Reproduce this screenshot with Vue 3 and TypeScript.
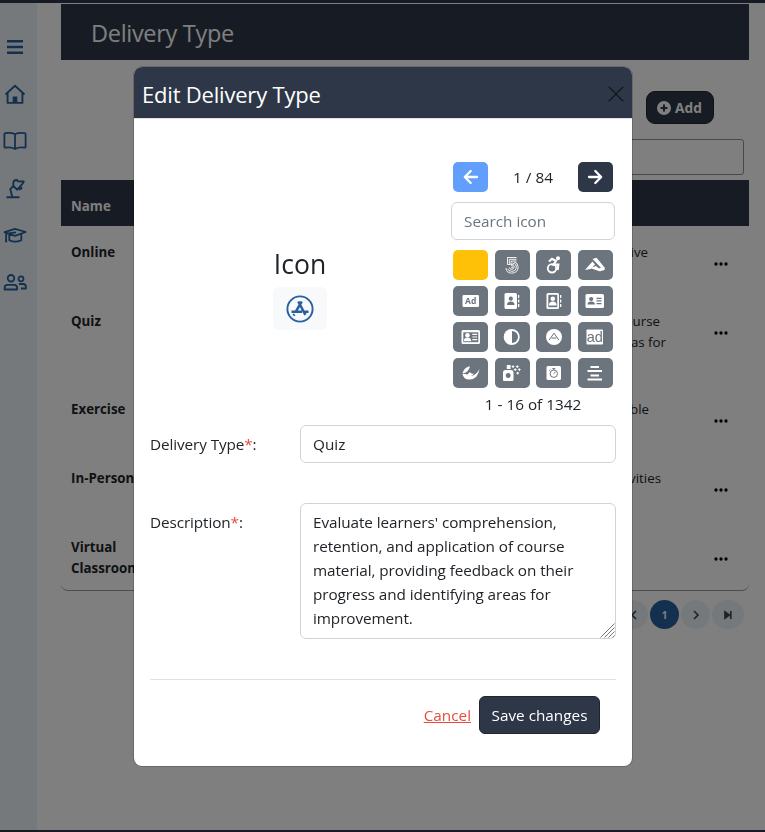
<script setup lang="ts">
import { ref } from 'vue'

interface Line { text: string; width: number }
interface Row { name: string; tall?: boolean; lines: Line[] }

const rows: Row[] = [
  { name: 'Online', lines: [{ text: 'interactive', width: 115 }] },
  { name: 'Quiz', tall: true, lines: [{ text: 'of course', width: 127 }, { text: 'areas for', width: 133 }] },
  { name: 'Exercise', lines: [{ text: 'applicable', width: 116 }] },
  { name: 'In-Person', lines: [{ text: 'activities', width: 128 }] },
  { name: 'Virtual Classroom', lines: [] },
]

const icons = [
  'blank', 'five', 'access', 'accusoft', 'ad', 'book', 'book-o', 'card',
  'card-o', 'adjust', 'adn', 'adversal', 'affiliate', 'spray', 'algolia', 'center',
]

const deliveryType = ref('Quiz')
const description = ref(
  "Evaluate learners' comprehension,\nretention, and application of course\nmaterial, providing feedback on their\nprogress and identifying areas for\nimprovement.",
)
const search = ref('')
</script>

<template>
  <div class="page">
    <div class="topbar"></div>
    <div class="shell">
      <nav class="side">
        <svg viewBox="0 0 24 24"><path d="M4 6.300h16M4 12h16M4 17.700h16" stroke-width="2.400" /></svg>
        <svg viewBox="0 0 24 24"><path d="M2.500 12.500 12 3.800 21.500 12.500M4.600 11V20.900h14.800V11" stroke-width="1.900" /><path class="solid" d="M9.700 14.500h4.600v6.500H9.700z" /></svg>
        <svg viewBox="0 0 24 24"><path d="M12 5.200C9 3.600 5 3.700 2.400 4.200q-1 .2-1 1v12.600q0 1 1.100.9c3-.5 6.500-.4 9.500 1.300 3-1.700 6.500-1.800 9.500-1.300q1.100.1 1.100-.9V5.200q0-.8-1-1C19 3.700 15 3.600 12 5.200zM12 5.200V20" stroke-width="1.800" /></svg>
        <svg viewBox="0 0 24 24"><path d="M3.500 21.300h13M9.300 21 7.300 13.200l3.200-3.500M10.300 6.500Q11 3.800 14 4l1 1.300 5.700.2-1 2-5.400 6.200-3.900-3.700zM18.300 10.800v1.900l-2.300.8" stroke-width="1.900" /></svg>
        <svg viewBox="0 0 24 24"><path d="M1.500 9.200 12 5.800l10.800 3.200L12 12.900zM6.300 11.500v5.700q5.500 3 12 0V11.500M3.100 10.200v8M13 9.300 3.500 10.700M2 18.300h2.200" stroke-width="1.800" /></svg>
        <svg viewBox="0 0 24 24"><circle cx="8" cy="8.300" r="3.300" stroke-width="1.800" /><circle cx="18" cy="8.800" r="2.500" stroke-width="1.700" /><path d="M1.600 19.500v-1.600q0-3 3-3h6.500q3 0 3 3V19.500zM16 14h4q2.900 0 2.900 2.800V18.500h-5" stroke-width="1.800" /></svg>
      </nav>
      <main class="main">
        <h2 class="title">Delivery Type</h2>
        <div class="actions">
          <button class="add">
            <svg viewBox="0 0 16 16"><path fill-rule="evenodd" d="M8 1a7 7 0 1 0 0 14A7 7 0 0 0 8 1zM7 4.500h2V7h2.500v2H9v2.500H7V9H4.500V7H7z" /></svg>
            <span>Add</span>
          </button>
        </div>
        <div class="filter"><div class="filter-box"></div></div>
        <div class="table">
          <div class="thead">Name</div>
          <div v-for="r in rows" :key="r.name" class="trow" :class="{ tall: r.tall }">
            <div class="name">{{ r.name }}</div>
            <div class="desc">
              <div v-for="l in r.lines" :key="l.text" class="dline" :style="{ width: l.width + 'px' }">{{ l.text }}</div>
            </div>
            <svg class="dots" viewBox="0 0 14 4"><circle cx="2" cy="2" r="1.650" /><circle cx="7" cy="2" r="1.650" /><circle cx="12" cy="2" r="1.650" /></svg>
          </div>
        </div>
        <div class="pager">
          <span class="pg"><svg viewBox="0 0 12 12"><path d="M8 2 4 6l4 4" /></svg></span>
          <span class="pg current">1</span>
          <span class="pg"><svg viewBox="0 0 12 12"><path d="M4 2l4 4-4 4" /></svg></span>
          <span class="pg last"><svg viewBox="0 0 12 12"><path class="fill" d="M3 3l4.300 3L3 9z" /><path d="M8.800 2v8" /></svg></span>
        </div>
      </main>
    </div>
    <div class="topbar foot"></div>
  </div>

  <div class="backdrop">
    <div class="modal">
      <header class="mhead">
        <h5>Edit Delivery Type</h5>
        <svg class="close" viewBox="0 0 16 16"><path d="M.8.8l14.400 14.400M15.200.8.8 15.200" /></svg>
      </header>
      <div class="mbody">
        <section class="iconrow">
          <div class="chosen">
            <h3>Icon</h3>
            <div class="preview">
              <svg viewBox="0 0 28 28"><circle cx="14" cy="14" r="12.600" stroke-width="1.900" /><path d="M12.300 6.500 19.400 19.800M15.700 6.500 9.700 16.800M8.400 19.200l-.9 1.400M5.500 16.800H16M18.800 16.800h3.700" stroke-width="2.500" /></svg>
            </div>
          </div>
          <div class="picker">
            <div class="pnav">
              <button class="sq prev"><svg viewBox="0 0 16 16"><path d="M14 8H2M7.700 2 1.800 8l5.900 6" /></svg></button>
              <span>1 / 84</span>
              <button class="sq next"><svg viewBox="0 0 16 16"><path d="M2 8h12M8.300 2l5.900 6-5.900 6" /></svg></button>
            </div>
            <input v-model="search" class="control search" placeholder="Search icon" />
            <div class="grid">
              <button v-for="ic in icons" :key="ic" class="sq tile" :class="{ picked: ic === 'blank' }">
                <svg v-if="ic === 'five'" viewBox="0 0 20 18"><g class="line thin"><path d="M14.500 1.500H5.500v7M14.500 3.300H7.300v4q7-1.300 7 3.500 0 4.500-4.600 4.500-3.500 0-4-2.500M14.500 5H9v1.200M5.500 8.500h3q3.800-.8 3.800 2 0 2.800-2.800 2.800-1.900 0-2-1.800M4 12.200q.3 4.900 5.700 4.900 6.400 0 6.400-6.300 0-4-4-4.900M9 9.700q1.800-.4 1.800 1t-1.600 1" /></g></svg>
                <svg v-else-if="ic === 'access'" viewBox="0 0 20 18"><g class="line"><path d="M5 5.500 8 2.800l4 2.200-2.500 3.700h4.800l-.7 5.300" stroke-width="2.200" /><circle cx="8" cy="12.300" r="4.200" stroke-width="1.900" /></g><circle cx="14" cy="2.300" r="2" /></svg>
                <svg v-else-if="ic === 'accusoft'" viewBox="0 0 20 18"><path d="M7.500 3 11.500 1.800l8.300 10-.3 2.200-4.500 1.200L12 13l4-1.200z" /><path d="M7.500 5.500 10 8.500 5.500 13 0 14zM5 12l6-2 5 4.300-1.500 1z" /></svg>
                <svg v-else-if="ic === 'ad'" viewBox="0 0 20 18"><rect x="1.500" y="3" width="16.500" height="12" rx="1.300" /><text x="9.700" y="12" class="adtext">Ad</text></svg>
                <svg v-else-if="ic === 'book'" viewBox="0 0 20 18"><rect x="2.500" y="1" width="12.500" height="16" rx="1.600" /><path d="M16 3h1.300v3H16zM16 7.500h1.300v3H16zM16 12h1.300v3H16z" /><g class="cut"><circle cx="8.800" cy="6.700" r="2.100" /><path d="M5 13q0-3.500 3.800-3.500T12.500 13z" /></g></svg>
                <svg v-else-if="ic === 'book-o'" viewBox="0 0 20 18"><rect x="2.500" y="1" width="12.500" height="16" rx="1.600" /><path d="M16 3h1.300v3H16zM16 7.500h1.300v3H16zM16 12h1.300v3H16z" /><path class="cut" d="M4.300 2.800h9v12.400h-9z" /><circle cx="8.800" cy="6.800" r="2.300" /><path d="M4.900 13.500q0-4 3.900-4t3.900 4z" /></svg>
                <svg v-else-if="ic === 'card'" viewBox="0 0 20 18"><rect x=".5" y="2" width="18.500" height="14" rx="1.600" /><g class="cut"><circle cx="6.200" cy="7" r="2.100" /><path d="M2.500 12.500q0-2.900 3.700-2.900t3.700 2.900zM11.500 5.700h5v1.200h-5zM11.500 8.300h5v1.200h-5zM11.500 11h5v1.200h-5z" /></g></svg>
                <svg v-else-if="ic === 'card-o'" viewBox="0 0 20 18"><rect x=".5" y="2" width="18.500" height="14" rx="1.600" /><path class="cut" d="M2.300 4.300h15v9.900h-15z" /><circle cx="6.500" cy="7.200" r="2.300" /><path d="M2.800 13.300q0-3.700 3.700-3.700t3.700 3.700zM11.300 5.800h4.900v1.200h-4.900zM11.300 8.400h4.900v1.200h-4.900zM11.300 11h4.900v1.200h-4.900z" /></svg>
                <svg v-else-if="ic === 'adjust'" viewBox="0 0 20 18"><circle cx="9.700" cy="9" r="8" /><path class="cut" d="M10 3a6 6 0 0 1 0 12z" /></svg>
                <svg v-else-if="ic === 'adn'" viewBox="0 0 20 18"><circle cx="10" cy="9" r="8" /><path class="cutline" d="M5.200 12 10 5.200l4.800 6.800M7.500 10h5" /></svg>
                <svg v-else-if="ic === 'adversal'" viewBox="0 0 20 18"><rect x="1.500" y="1.500" width="16.500" height="15" rx=".8" /><text x="9.700" y="14" class="adversal">ad</text></svg>
                <svg v-else-if="ic === 'affiliate'" viewBox="0 0 20 18"><path d="M1.500 10q1 5.800 7.500 5.500 8-.7 9.500-10.500-3.500 6.700-9 7-3.500.3-4.500-2z" /><path d="M1.500 9.500C2.500 5 6 2.500 9 2.500 8 6 5.500 9 1.500 9.500z" /><path d="M5.300 10.700q2.500-.5 3.500-2.700 1.500 2.500 4.200 1.500-2 3-5.500 3z" /></svg>
                <svg v-else-if="ic === 'spray'" viewBox="0 0 20 18"><path fill-rule="evenodd" d="M4.800 1h3.800v4H4.800zM1 8.700Q1 6 3.500 6H9q2.500 0 2.500 2.700V16q0 1-1 1H2q-1 0-1-1zM6.200 9a2.500 2.500 0 1 0 .01 0z" /><path d="M10.300 2l.7-1 .7 1 1 .6-1 .6-.7 1-.7-1-1-.6zM14.600 2l.7-1 .7 1 1 .6-1 .6-.7 1-.7-1-1-.6zM12.500 5l.7-1 .7 1 1 .6-1 .6-.7 1-.7-1-1-.6zM16.600 5l.7-1 .7 1 1 .6-1 .6-.7 1-.7-1-1-.6zM15 8.500l.7-1 .7 1 1 .6-1 .6-.7 1-.7-1-1-.6z" /></svg>
                <svg v-else-if="ic === 'algolia'" viewBox="0 0 20 18"><rect x="2.500" y="2" width="14.500" height="14" rx="1.500" /><circle class="cutline" cx="9.800" cy="9.700" r="3.700" /><path class="cutline" d="M8.300 4.600h3M9.800 9.700l1.500-2M5.400 6.600l1-1M9.800 5v1" /></svg>
                <svg v-else-if="ic === 'center'" viewBox="0 0 20 18"><path d="M5.500 2H14v2H5.500zM2.500 6H17v2H2.500zM5.500 10.500H14v2H5.500zM2.500 14.500H17v2H2.500z" /></svg>
              </button>
            </div>
            <div class="count">1 - 16 of 1342</div>
          </div>
        </section>
        <div class="field">
          <label>Delivery Type<i>*</i>:</label>
          <input v-model="deliveryType" class="control" />
        </div>
        <div class="field area">
          <label>Description<i>*</i>:</label>
          <div class="tawrap">
            <textarea v-model="description" class="control"></textarea>
            <svg class="grip" viewBox="0 0 15 15"><path d="M.5 14.500 14.500.5M4.500 14.500l10-10M8.500 14.500l6-6M12.500 14.500l2-2" /></svg>
          </div>
        </div>
        <footer class="mfoot">
          <a class="cancel">Cancel</a>
          <button class="save">Save changes</button>
        </footer>
      </div>
    </div>
  </div>
</template>

<style>
body { overflow: hidden; background: #fff; }
</style>

<style scoped>
* { box-sizing: border-box; }
.page, .backdrop { font-family: "Open Sans", "Noto Sans", sans-serif; color: #212529; }
button, input, textarea { font: inherit; letter-spacing: inherit; margin: 0; }
h2, h3, h5 { margin: 0; font-weight: 400; }
.page { height: 832px; display: flex; flex-direction: column; }
.topbar { height: 3px; flex: none; background: #2d3748; }
.foot { height: 2px; }
.shell { flex: 1; display: flex; min-height: 0; }
.side { width: 37px; background: #eaf3f9; padding: 32px 0 0 3px; display: flex; flex-direction: column; gap: 23px; flex: none; }
.side svg { width: 24px; height: 24px; fill: none; stroke: #28609f; stroke-linejoin: round; flex: none; }
.side .solid { fill: #28609f; stroke: none; }
.main { flex: 1; padding: 1px 16px 0 24px; }
.title { height: 56px; background: #2d3748; color: #fff; font-size: 23.500px; line-height: 59px; padding-left: 30px; letter-spacing: -.3px; }
.actions { height: 79px; padding: 31px 35px 0 0; display: flex; justify-content: flex-end; align-items: flex-start; }
.add { width: 68px; height: 33px; border: 1px solid #212529; border-radius: 9px; background: #2d3748; color: #fff; font-size: 13.700px; font-weight: 700; display: flex; align-items: center; justify-content: center; gap: 3px; padding: 0 2px 0 0; }
.add svg { width: 16px; height: 16px; fill: #fff; }
.filter { height: 41px; padding-right: 5px; display: flex; justify-content: flex-end; }
.filter-box { width: 400px; height: 36px; border: 1px solid #909090; border-radius: 3px; }
.table { height: 411px; border-bottom: 1px solid #9a9a9a; border-radius: 0 0 7px 7px; font-size: 13.300px; }
.thead { height: 46px; background: #2d3748; color: #fff; font-weight: 700; line-height: 52px; padding-left: 10px; }
.trow { height: 69px; padding: 16px 21px 0 10px; display: flex; line-height: 21px; }
.trow.tall { height: 88px; }
.name { width: 90px; font-weight: 700; }
.desc { flex: 1; padding-left: 372px; }
.dline { text-align: right; white-space: nowrap; }
.dots { width: 14px; height: 4px; margin-top: 20px; flex: none; }
.pager { padding: 9px 5px 0; display: flex; justify-content: flex-end; gap: 2px; }
.pg { width: 29px; height: 29px; border-radius: 50%; background: #eaf3f9; display: grid; place-items: center; font-size: 10px; font-weight: 700; }
.pg.current { background: #28609f; color: #fff; }
.pg.last { width: 32px; border-radius: 15px; }
.pg svg { width: 12px; height: 12px; fill: none; stroke: #444; stroke-width: 1.700; }
.pg .fill { fill: #444; }

.backdrop { position: fixed; inset: 0; background: rgba(0, 0, 0, .5); padding: 67px 133px 0 134px; font-size: 15.300px; }
.modal { height: 699px; background: #fff; border-radius: 8px; overflow: hidden; box-shadow: 0 0 0 1px rgba(0, 0, 0, .18); }
.mhead { height: 52px; background: #2d3748; color: #fff; display: flex; align-items: center; justify-content: space-between; padding: 2px 8px 0; border-bottom: 1px solid #dee2e6; }
.mhead h5 { font-size: 22px; letter-spacing: -.2px; }
.close { width: 16px; height: 16px; fill: none; stroke: #151a22; stroke-width: 1.500; }
.mbody { padding: 0 16px; }
.iconrow { height: 306px; display: flex; padding: 43px 0 0; }
.chosen { width: 300px; padding-top: 85px; display: flex; flex-direction: column; align-items: center; gap: 6px; }
.chosen h3 { font-size: 26.500px; line-height: 34px; }
.preview { width: 54px; height: 43px; background: #f8f9fa; border-radius: 6px; display: grid; place-items: center; }
.preview svg { width: 28px; height: 28px; fill: none; stroke: #28609f; }
.picker { width: 164px; margin-left: 1px; }
.pnav { display: flex; justify-content: space-between; align-items: center; padding: 0 2px; height: 30px; }
.sq { width: 35px; height: 30px; border: 0; border-radius: 5px; padding: 0; display: grid; place-items: center; }
.prev { background: #629ffc; }
.next { background: #2d3748; }
.pnav svg { width: 16px; height: 16px; fill: none; stroke: #fff; stroke-width: 2.300; stroke-linecap: round; stroke-linejoin: round; }
.control { display: block; border: 1px solid #ced4da; border-radius: 6px; background: #fff; color: #212529; height: 38px; padding: 0 12px; outline: none; width: 100%; }
.search { margin-top: 10px; }
.search::placeholder { color: #6c757d; opacity: 1; }
.grid { display: grid; grid-template-columns: 35px 35px 35px 35px; justify-content: space-between; gap: 6px 0; padding: 0 2px; margin-top: 10px; }
.tile { background: #6c757d; }
.tile.picked { background: #ffc107; }
.tile svg { width: 20px; height: 18px; fill: #fff; }
.tile .line { fill: none; stroke: #fff; }
.tile .thin { stroke-width: .9; }
.tile .cut, .tile .adtext, .tile .adversal { fill: #6c757d; }
.tile .cutline { fill: none; stroke: #6c757d; stroke-width: 1; }
.adtext { font: 700 8.500px "Open Sans", sans-serif; text-anchor: middle; }
.adversal { font: 14.500px "Liberation Sans", sans-serif; text-anchor: middle; }
.count { text-align: center; line-height: 24px; margin-top: 4px; }
.field { display: flex; height: 38px; align-items: center; }
.field label { width: 150px; flex: none; letter-spacing: -.1px; }
.field i { font-style: normal; color: #e74c3c; }
.area { margin-top: 40px; height: 136px; align-items: flex-start; }
.area label { line-height: 38px; }
.tawrap { position: relative; flex: 1; }
textarea.control { height: 136px; padding: 6px 12px; line-height: 24px; resize: none; overflow: hidden; white-space: pre; letter-spacing: -.08px; }
.grip { position: absolute; right: 1px; bottom: 1px; width: 15px; height: 15px; fill: none; stroke: #777; }
.mfoot { margin-top: 40px; border-top: 1px solid #dee2e6; padding: 16px 16px 0; display: flex; justify-content: flex-end; align-items: center; gap: 8px; }
.cancel { color: #e74c3c; text-decoration: underline; }
.save { height: 38px; width: 121px; border: 1px solid #212529; border-radius: 6px; background: #2d3748; color: #fff; padding: 0; white-space: nowrap; }
</style>
